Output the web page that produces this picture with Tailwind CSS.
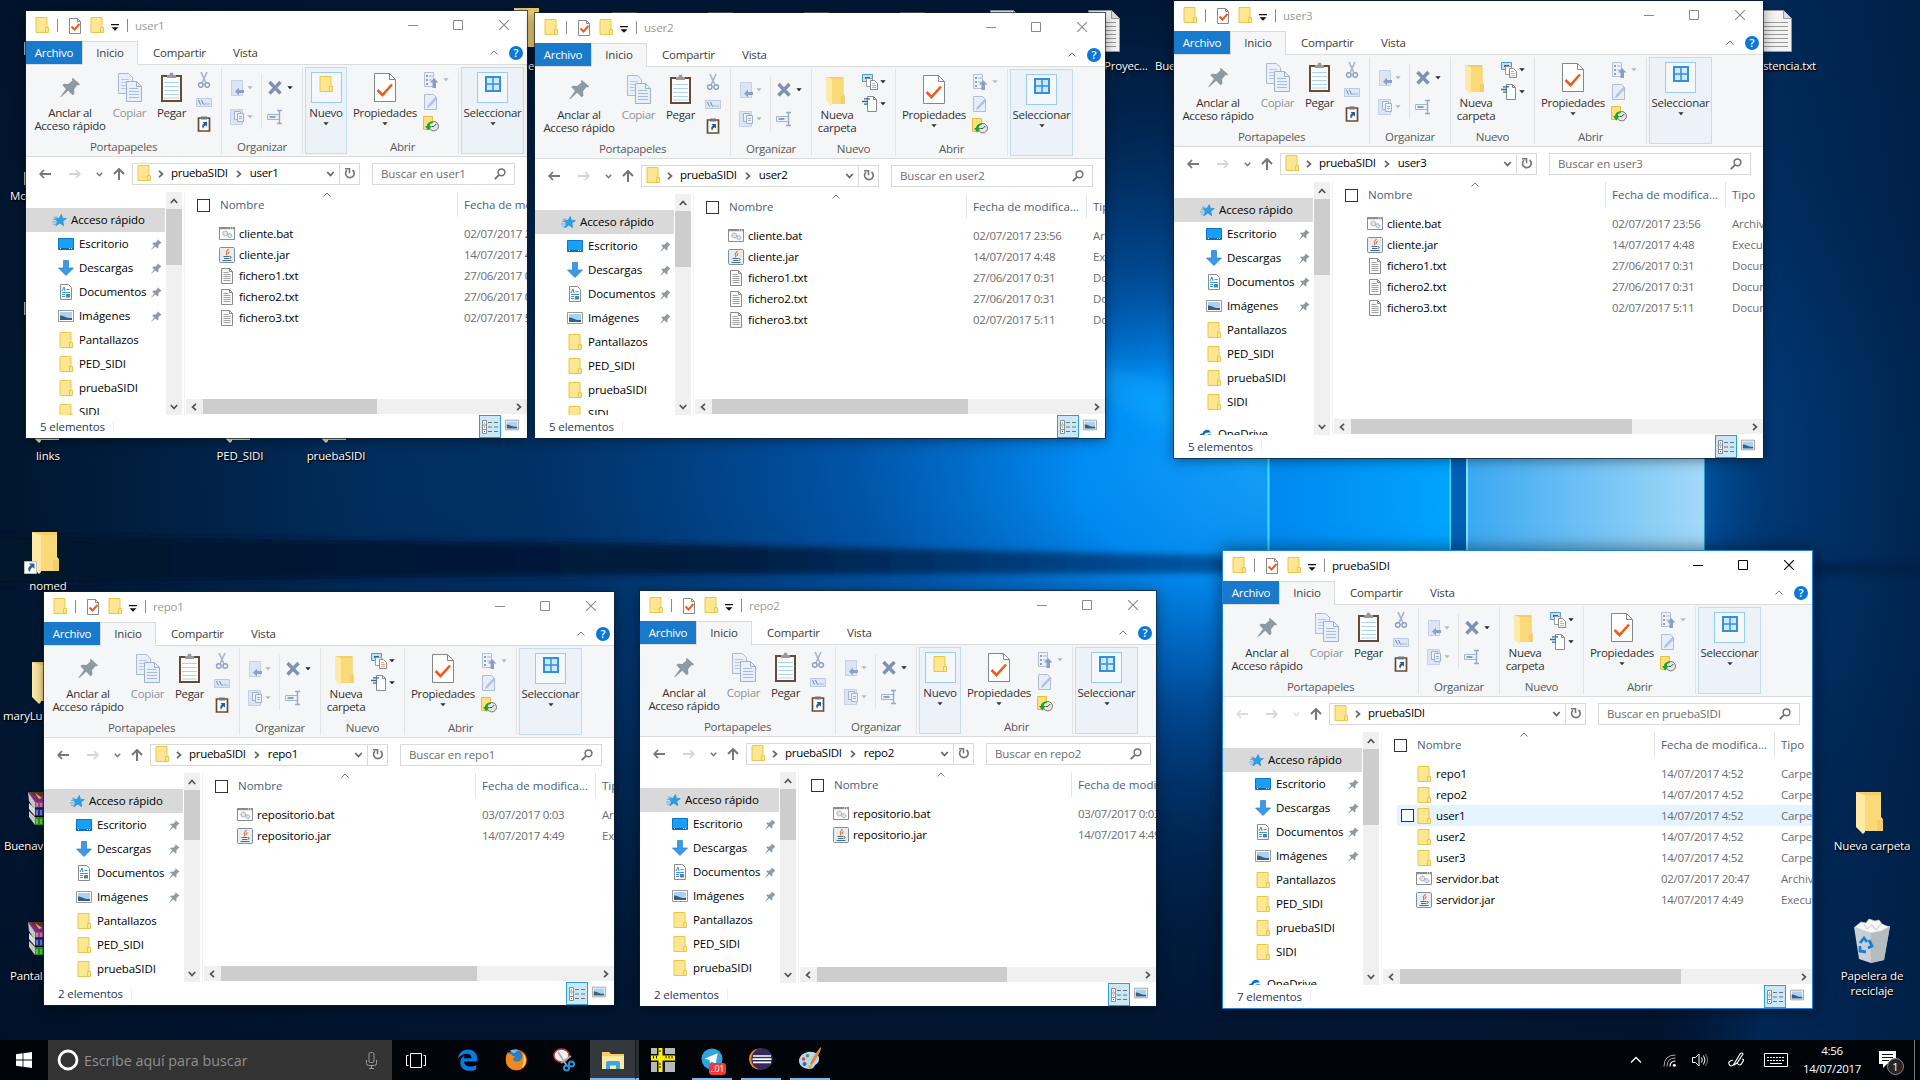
<!DOCTYPE html>
<html lang="es">
<head>
<meta charset="utf-8">
<title>Escritorio</title>
<script src="https://cdn.jsdelivr.net/npm/@tailwindcss/browser@4"></script>
</head>
<body class="relative h-[1080px] w-[1920px] overflow-hidden bg-[#001733] font-['Open_Sans',sans-serif] text-[11.5px] leading-[14px] text-black">

<!-- icon library -->
<svg class="hidden">
  <symbol id="folder" viewBox="0 0 16 16"><path d="M2 .5h11v15H2z" fill="#ffe690" stroke="#e9c64b"/><path d="M11.500 10.500h3v5h-3z" fill="#ffe690" stroke="#e9c64b"/></symbol>
  <symbol id="bigfolder" viewBox="0 0 32 42"><path d="M4 0h25v25l2 2v12H10z" fill="#f3cd68"/><path d="M4 0l9 3v37l-2 2-7-7z" fill="#ffe9a6"/><path d="M13 3h16v25h-4v11H13z" fill="#f9d978"/></symbol>
  <symbol id="check" viewBox="0 0 16 16"><path d="M2.500.5h8l3 3v12h-11z" fill="#fff" stroke="#8a8a8a"/><path d="M10.500.5v3h3" fill="none" stroke="#8a8a8a"/><path d="M4.500 8.500l3 3 5-5.500" fill="none" stroke="#f05a1a" stroke-width="2"/></symbol>
  <symbol id="bigcheck" viewBox="0 0 22 30"><path d="M.5.5h15l6 6v22H.5z" fill="#fff" stroke="#868686"/><path d="M15.500.5v6h6" fill="none" stroke="#868686"/><path d="M3.500 17l5 5L18 11.500" fill="none" stroke="#f05a1a" stroke-width="2.600"/></symbol>
  <symbol id="qat" viewBox="0 0 8 7"><path d="M0 0h8v1.200H0zM.5 3.200h7L4 6.800z" fill="#111"/></symbol>
  <symbol id="down" viewBox="0 0 6 4"><path d="M.3.2h5.400L3 3.300z" fill="currentColor"/></symbol>
  <symbol id="pin" viewBox="0 0 22 22"><path d="M13.500 1l7.500 6.500-1.500 1.300-1.200-.4-3.600 4.500.4 4.600-1.900 1.600-4.600-4.600L1 21.300l-.6-.5 5.800-8.100L2.400 8.500l1.800-1.500 4.500.3 4.300-3.600-.6-1.500z" fill="#8e9aa2"/></symbol>
  <symbol id="copy" viewBox="0 0 24 29"><path d="M.5.5h10l4 4v16H.5z" fill="#e9f0fa" stroke="#aab9d8"/><path d="M3 6.500h8M3 9.500h9M3 12.500h9M3 15.500h9" stroke="#b6c6e4"/><path d="M8.500 8.500h10l5 5v15h-15z" fill="#e9f0fa" stroke="#9eafd2"/><path d="M18.500 8.500v5h5" fill="none" stroke="#9eafd2"/><path d="M11 15.500h9M11 18.500h10M11 21.500h10M11 24.500h10" stroke="#a9bbdd"/></symbol>
  <symbol id="paste" viewBox="0 0 21 30"><path d="M1 4h19v25H1z" fill="#fff" stroke="#6b4a33" stroke-width="2"/><path d="M3 10.500h15M3 14.500h15M3 18.500h15M3 22.500h15M3 26h15" stroke="#a9d5f2"/><path d="M6 6V3h2.500L9 .8h3l.5 2.200H15v3z" fill="#9a9a9a"/></symbol>
  <symbol id="cut" viewBox="0 0 16 16"><path d="M5 0l5 11M11 0L6 11" stroke="#a9b4c8" stroke-width="1.600"/><circle cx="4.800" cy="13" r="2.300" fill="none" stroke="#8ea0c4" stroke-width="1.500"/><circle cx="11.200" cy="13" r="2.300" fill="none" stroke="#8ea0c4" stroke-width="1.500"/></symbol>
  <symbol id="path" viewBox="0 0 16 16"><path d="M.5 4.500h15v8H.5z" fill="#dde7f6" stroke="#b9c9e6"/><path d="M2.500 6l2 4.500M5.500 6l2 4.500" stroke="#6d83ad"/><path d="M8.500 10h1M10.500 10h1M12.500 10h1" stroke="#6d83ad"/></symbol>
  <symbol id="pastelink" viewBox="0 0 16 16"><path d="M2.500 2h11v13h-11z" fill="#fff" stroke="#6b4a33" stroke-width="1.700"/><path d="M5 3.500V.5h6v3z" fill="#777"/><path d="M6.500 6H11v4.500L9.500 9.200C8 10 7.500 11 7.300 12.800 5.500 10.800 6.200 8.500 7.900 7.500z" fill="#1f5ba8"/></symbol>
  <symbol id="moveto" viewBox="0 0 16 16"><path d="M1.500.5h11v15h-11z" fill="#dbe5f4" stroke="#c3d1ea"/><path d="M5 11.500l4-4v2.500h5v3H9v2.500z" fill="#8c9fc8"/></symbol>
  <symbol id="copyto" viewBox="0 0 16 16"><path d="M.5.5h12v15H.5z" fill="#dbe5f4" stroke="#c3d1ea"/><path d="M4.500 2.500h6v8h-6z" fill="#eef3fb" stroke="#9eafd2"/><path d="M7.500 4.500h6v8h-6z" fill="#eef3fb" stroke="#9eafd2"/><path d="M9 7.500h3M9 9.500h3" stroke="#9eafd2"/></symbol>
  <symbol id="del" viewBox="0 0 16 16"><path d="M2.500 2l11 11.500M13.500 2l-11 11.500" stroke="#7f92b4" stroke-width="3.400"/></symbol>
  <symbol id="rename" viewBox="0 0 16 16"><path d="M.5 5.500h12v5H.5z" fill="#eef3fb" stroke="#a3b3d3"/><path d="M2.500 7h6v2h-6z" fill="#8c9fc8"/><path d="M10 1.500h5M10 14.500h5M12.500 1.500v13" stroke="#97a8cb" stroke-width="1.400"/></symbol>
  <symbol id="newitem" viewBox="0 0 16 16"><path d="M.5.5h10v7H.5z" fill="#bfe2f8" stroke="#4a9ccc"/><path d="M3 3h5v2H3z" fill="#1f6fa8"/><path d="M4.500 4.500h6v8h-6z" fill="#fff" stroke="#9a9a9a"/><path d="M8.500 6.500h4l3 3v6h-7z" fill="#fff" stroke="#8a8a8a"/><path d="M10 9.500h3M10 11.500h4M10 13.500h4" stroke="#e3a48a"/></symbol>
  <symbol id="easy" viewBox="0 0 16 16"><path d="M5.500.5h6l3 3v12h-9z" fill="#fff" stroke="#8a8a8a"/><path d="M11.500.5v3h3" fill="none" stroke="#8a8a8a"/><path d="M2 2.800h6M0 5.500h6M2 8.200h4" stroke="#2a6ea8" stroke-width="1.300"/></symbol>
  <symbol id="open" viewBox="0 0 16 16"><path d="M1.500.5h9v14h-9z" fill="#eef2fa" stroke="#b4c1dc"/><path d="M3 3h2v2H3zM3 7h2v2H3zM3 11h2v2H3z" fill="#8e9fc4"/><path d="M6 4h4M6 8h3" stroke="#a9b8d6"/><path d="M11 6l4.500 4.500H13V16H9.500v-5.500H7z" fill="#8c9dc2"/></symbol>
  <symbol id="edit" viewBox="0 0 16 16"><path d="M1.500.5h9l3 3v12h-12z" fill="#e6eefa" stroke="#aebcdb"/><path d="M14 4.500L7 12l-2.500 1.500L5.500 11l7-7.500z" fill="#b9c8e4" stroke="#9aabcf" stroke-width=".6"/></symbol>
  <symbol id="history" viewBox="0 0 16 16"><path d="M.5.5h9v13h-9z" fill="#ffe07a" stroke="#e3bd3d"/><circle cx="10.800" cy="10.200" r="4.700" fill="#e6e6e6" stroke="#767676"/><path d="M10.800 10.500l2.500-2.500M10.800 10.500H8.500" stroke="#444"/><path d="M9.500 5.500C5.500 5.500 4 8 4 10H2l3.300 4.500L8.500 10H6.600c0-2 1.200-3 3.400-3z" fill="#1fa52b"/></symbol>
  <symbol id="select" viewBox="0 0 16 16"><path d="M1 1h14v14H1z" fill="#cfe9fb" stroke="#3390de" stroke-width="2"/><path d="M8 1v14M1 8h14" stroke="#3390de" stroke-width="1.500"/></symbol>
  <symbol id="star" viewBox="0 0 16 16"><path d="M10 1.500l1 4 4.300.5-3.700 2.500.8 5-4-2.900-4.400 3.200 1.800-4.800L3 6l4.400-.2z" fill="#2aa0ea" stroke="#1280cc" stroke-width=".6"/><path d="M2 4.500h4M1 7h4M0 9.500h5M1 12h4" stroke="#4cb2f0"/></symbol>
  <symbol id="desk" viewBox="0 0 16 16"><path d="M.5 2.500h15v11H.5z" fill="#18a0f6" stroke="#0b74c4"/><path d="M1 12h14v1.500H1z" fill="#0a68b0"/><path d="M2 12.500h1M11 12.500h1M13 12.500h1" stroke="#d8f0ff"/></symbol>
  <symbol id="dl" viewBox="0 0 16 16"><path d="M5.500.5h5V8h5L8 15.500.5 8h5z" fill="#3a9ae8" stroke="#2580cf" stroke-width=".7"/></symbol>
  <symbol id="docs" viewBox="0 0 16 16"><path d="M2.500.5h8l3 3v12h-11z" fill="#fff" stroke="#8a8a8a"/><path d="M4 7l2-4 1 4" stroke="#2b8ad0" fill="none"/><path d="M8.500 5.500h3M4 8.500h8M4 10.500h3M4 12.500h3" stroke="#3a97d8"/><path d="M8 10h4v3.500H8z" fill="#4a86a8"/></symbol>
  <symbol id="pics" viewBox="0 0 16 16"><path d="M.5 2.500h15v11H.5z" fill="#fff" stroke="#9a9a9a"/><path d="M2 4h12v8H2z" fill="#a9d2f6"/><path d="M2 7.500c4 0 6 3 12 2.500v2H2z" fill="#38607a"/></symbol>
  <symbol id="onedrive" viewBox="0 0 16 16"><path d="M1 14C0 10 2 7.500 4.500 7.500 5.500 4 9 3 11.500 4.500L13 7c-5-1.500-8 1-8 7z" fill="#0a6fc2"/><path d="M6 14c0-4 3-6.500 6.500-5.500C15 9 16 11 16 14z" fill="#0a6fc2"/></symbol>
  <symbol id="bat" viewBox="0 0 16 16"><path d="M.5 1.500h15v12H.5z" fill="#fff" stroke="#8c8c8c"/><path d="M0 1h16v2.200H0z" fill="#8c8c8c"/><path d="M11 2h1M13 2h1" stroke="#fff"/><circle cx="6.300" cy="7.500" r="2.500" fill="#e4e4e4" stroke="#8e8e8e" stroke-dasharray="1.200 .6"/><circle cx="10.800" cy="9.700" r="2" fill="#cfe6f5" stroke="#7fa4bd" stroke-dasharray="1 .5"/></symbol>
  <symbol id="jar" viewBox="0 0 16 16"><rect x=".5" y=".5" width="15" height="15" rx="1" fill="#e6edf3" stroke="#7d8fa1"/><path d="M9.500 2c-.5 1.500-3 2-2 4 .5 1 .5 1.500-.3 2.200M10.500 4.500c-1.500.7-1.500 1.500-1 2.500" fill="none" stroke="#e8762c" stroke-width="1.200"/><path d="M4.500 9.500h6M5 11.500h5M3.500 13.500h9" stroke="#4a6c8c" stroke-width="1.100"/><path d="M11 9.500c2 0 1.500 2-.5 2" fill="none" stroke="#4a6c8c"/></symbol>
  <symbol id="txt" viewBox="0 0 16 16"><path d="M2.500.5h8l3 3v12h-11z" fill="#fafafa" stroke="#8a8a8a"/><path d="M10.500.5v3h3" fill="none" stroke="#8a8a8a"/><path d="M4.500 4.500h5M4.500 6.500h7M4.500 8.500h7M4.500 10.500h7M4.500 12.500h7" stroke="#a2a2a2"/></symbol>
  <symbol id="bigtxt" viewBox="0 0 32 42"><path d="M.5.5h23l8 8v33H.5z" fill="#f4f4f4" stroke="#999"/><path d="M23.500.5v8h8" fill="#ddd" stroke="#999"/><path d="M4 12.500h24M4 16.500h24M4 20.500h24M4 24.500h24M4 28.500h24M4 32.500h24M4 36.500h24" stroke="#9b9b9b"/></symbol>
  <symbol id="details" viewBox="0 0 16 16"><path d="M.5 1.500h4v13h-4zM.5 6h4M.5 10.500h4" fill="#fff" stroke="#8d8d8d"/><path d="M2 4h1" stroke="#567"/><path d="M2 8h1" stroke="#27c"/><path d="M2 12.500h1" stroke="#c22"/><path d="M6 3.500h4M12 3.500h4M6 8h4M12 8h4M6 12.500h4M12 12.500h4" stroke="#6b7780"/></symbol>
  <symbol id="larr" viewBox="0 0 12 10"><path d="M5 1L1.200 5 5 9M1.500 5H12" fill="none" stroke="currentColor" stroke-width="1.800"/></symbol>
  <symbol id="rarr" viewBox="0 0 12 10"><path d="M7 1l3.800 4L7 9M10.500 5H0" fill="none" stroke="currentColor" stroke-width="1.800"/></symbol>
  <symbol id="uarr" viewBox="0 0 12 12"><path d="M1 6l5-5 5 5M6 1.500V12" fill="none" stroke="currentColor" stroke-width="2"/></symbol>
  <symbol id="chd" viewBox="0 0 8 6"><path d="M.8 1L4 4.500 7.200 1" fill="none" stroke="currentColor" stroke-width="1.800"/></symbol>
  <symbol id="chu" viewBox="0 0 8 6"><path d="M.8 5L4 1.500 7.200 5" fill="none" stroke="currentColor" stroke-width="1.800"/></symbol>
  <symbol id="chuthin" viewBox="0 0 8 5"><path d="M.5 4.500L4 1l3.500 3.500" fill="none" stroke="currentColor" stroke-width="1"/></symbol>
  <symbol id="chr" viewBox="0 0 6 8"><path d="M1 .8L4.500 4 1 7.200" fill="none" stroke="currentColor" stroke-width="1.700"/></symbol>
  <symbol id="chl" viewBox="0 0 6 8"><path d="M5 .8L1.500 4 5 7.200" fill="none" stroke="currentColor" stroke-width="1.700"/></symbol>
  <symbol id="refresh" viewBox="0 0 12 12"><path d="M3 2.200A4.300 4.300 0 108.500 2" fill="none" stroke="#777" stroke-width="1.700"/><path d="M1 .8h4.500v4.400" fill="none" stroke="#777" stroke-width="1.600"/></symbol>
  <symbol id="lens" viewBox="0 0 12 12"><circle cx="7.500" cy="4.300" r="3.400" fill="none" stroke="#6f6f6f" stroke-width="1.500"/><path d="M5 6.800L.8 11.200" stroke="#6f6f6f" stroke-width="1.800"/></symbol>
  <symbol id="max" viewBox="0 0 10 10"><path d="M.5.5h9v9h-9z" fill="none" stroke="currentColor"/></symbol>
  <symbol id="close" viewBox="0 0 10 10"><path d="M0 0l10 10M10 0L0 10" stroke="currentColor" stroke-width="1.100"/></symbol>
  <symbol id="shortcut" viewBox="0 0 13 13"><path d="M.5.500h12v12H.5z" fill="#fff" stroke="#bbb"/><path d="M5 2.500h5.500V8L8.700 6.200C6.500 7.500 6 9 6 11 3 9 4 6 6.800 4.300z" fill="#2a5fa8"/></symbol>
  <symbol id="rar" viewBox="0 0 42 36"><path d="M1 1h30l8 10H8z" fill="#8d2a86"/><path d="M3 1h28l3 4H7z" fill="#5d3a28"/><path d="M1 1l7 10v8L2 10z" fill="#c9c9c9"/><path d="M8 11h32v6H8z" fill="#a64aa0"/><path d="M2 12l6 6v7l-6-7z" fill="#dcdcdc"/><path d="M8 17h32v8H8z" fill="#1b2fd0"/><path d="M2 20l6 6v8l-6-8z" fill="#c9c9c9"/><path d="M8 26h32v8H8z" fill="#19a31c"/><path d="M8 17h32M8 25.500h32" stroke="#000"/><path d="M10 12v4M14 12v4M10 19v5M14 19v5M10 28v5M14 28v5" stroke="#e9e07a"/><path d="M8 2l7 5-3 1z" fill="#dcd93a"/></symbol>
</svg>

<!-- wallpaper -->
<svg class="absolute inset-0" width="1920" height="1080" viewBox="0 0 1920 1080">
  <defs>
    <linearGradient id="base" x1="0" x2="1" y1="0" y2="0"><stop offset="0" stop-color="#00162f"/><stop offset=".2" stop-color="#002f60"/><stop offset=".5" stop-color="#003a78"/><stop offset=".75" stop-color="#00408a"/><stop offset="1" stop-color="#002550"/></linearGradient>
    <radialGradient id="glow" cx="0" cy="0" r="1" gradientUnits="userSpaceOnUse" gradientTransform="translate(1320 480) scale(800 390)"><stop offset="0" stop-color="#1aa5ff"/><stop offset=".3" stop-color="#0090fa"/><stop offset=".58" stop-color="#0064c4" stop-opacity=".7"/><stop offset="1" stop-color="#0050a0" stop-opacity="0"/></radialGradient>
    <linearGradient id="vert" x1="0" x2="0" y1="0" y2="1"><stop offset="0" stop-color="#00132c" stop-opacity=".9"/><stop offset=".18" stop-color="#00132c" stop-opacity=".4"/><stop offset=".35" stop-color="#00132c" stop-opacity="0"/><stop offset=".62" stop-color="#00132c" stop-opacity=".1"/><stop offset=".85" stop-color="#00122a" stop-opacity=".75"/><stop offset="1" stop-color="#001026" stop-opacity=".95"/></linearGradient>
    <linearGradient id="right" x1="0" x2="1" y1="0" y2="0"><stop offset="0" stop-color="#002450" stop-opacity="0"/><stop offset=".4" stop-color="#002f64" stop-opacity=".75"/><stop offset="1" stop-color="#00224a" stop-opacity=".85"/></linearGradient>
    <linearGradient id="stripe" x1="0" x2="1" y1="0" y2="0"><stop offset="0" stop-color="#00122a"/><stop offset=".6" stop-color="#001c40"/><stop offset="1" stop-color="#004a94" stop-opacity=".8"/></linearGradient>
    <linearGradient id="p1" x1="0" x2="1" y1="0" y2="0"><stop offset="0" stop-color="#0088ee"/><stop offset="1" stop-color="#00a4ff"/></linearGradient>
    <linearGradient id="p2" x1="0" x2="1" y1="0" y2="0"><stop offset="0" stop-color="#3aa8f2"/><stop offset="1" stop-color="#a3d9f8"/></linearGradient>
    <filter id="b" x="-10%" y="-60%" width="120%" height="220%"><feGaussianBlur stdDeviation="3"/></filter>
    <filter id="bb" x="-30%" y="-30%" width="160%" height="160%"><feGaussianBlur stdDeviation="16"/></filter>
  </defs>
  <path d="M0 0h1920v1080H0z" fill="url(#base)"/>
  <path d="M0 0h1920v1080H0z" fill="url(#glow)"/>
  <path d="M1270 470L1000 340 1105 375 1270 420z" fill="#12b4ff" opacity=".8" filter="url(#bb)"/>
  <path d="M0 0h1920v1080H0z" fill="url(#vert)"/>
  <path d="M1660 0h260v1080h-260z" fill="url(#right)"/>
  <path d="M-20 536L620 543 1240 556v17L620 575 -20 584z" fill="url(#stripe)" filter="url(#b)"/>
  <path d="M1810 562h110v14h-110z" fill="#001a3c" opacity=".5" filter="url(#b)"/>
  <path d="M1268 440h183v110h-183z" fill="url(#p1)"/><path d="M1268.500 440v110M1450.500 440v110" stroke="#3fe0ff" stroke-width="2"/>
  <path d="M1451 440h15v112h-15z" fill="#0060b4"/>
  <path d="M1466 440h238v110h-238z" fill="url(#p2)"/><path d="M1467 440v110M1703.500 440v110" stroke="#7fe6ff" stroke-width="2"/>
</svg>

<div id="desktop"></div>
<div id="windows"></div>

<!-- taskbar -->
<div class="absolute bottom-0 left-0 flex h-10 w-full bg-[#010408] text-white">
  <div class="flex w-12 items-center justify-center"><svg width="16" height="16" viewBox="0 0 16 16" class="fill-white"><path d="M0 2.200L6.600 1.300v6.300H0zM7.400 1.200L16 0v7.600H7.400zM0 8.400h6.600v6.300L0 13.800zM7.400 8.400H16V16l-8.600-1.200z"/></svg></div>
  <div class="flex w-[344px] items-center bg-[#333333] pr-[15px] pl-[9px]">
    <svg width="22" height="22" viewBox="0 0 22 22"><circle cx="11" cy="11" r="9" fill="none" stroke="#fff" stroke-width="2.800"/></svg>
    <span class="mt-px ml-[5px] text-[14.3px] leading-5 text-[#8f8f8f]">Escribe aquí para buscar</span>
    <svg class="ml-auto" width="11" height="17" viewBox="0 0 11 17" fill="none" stroke="#9a9a9a"><rect x="3" y=".5" width="5" height="10" rx="1.500"/><path d="M.5 8v3.500q0 2 2 2h6q2 0 2-2V8M5.500 13.500v3M3 16.500h5"/></svg>
  </div>
  <div class="flex w-[47px] items-center justify-center"><svg width="20" height="15" viewBox="0 0 20 15" fill="none" stroke="#fff"><path d="M4.500.5h11v14h-11zM2.500 2.500h-2v10h2M17.500 2.500h2v10h-2"/></svg></div>
  <div class="flex w-[56px] items-center justify-center"><svg width="21" height="22" viewBox="0 0 21 22"><path d="M.8 9.800C1.500 4 5.500.5 11 .5c6 0 9.500 4.500 9.500 9.500v2.500H7c.2 3.500 3 5 6.500 5 2.300 0 4-.6 5.700-1.600v4.400c-1.800 1-4 1.500-6.500 1.500-6 0-9.400-3.300-9.400-8.300 0-3.500 2-6 4.800-7.300-.8 1-1.200 2-1.300 3h7.700c0-2.700-1.400-4.500-4.400-4.500C6.300 4.700 2.700 6.700.8 9.800z" fill="#0a7be0"/></svg></div>
  <div class="flex w-[43px] items-center justify-center"><svg width="23" height="22" viewBox="0 0 23 22"><circle cx="11.500" cy="11" r="10.500" fill="#dd4a1a"/><circle cx="10.500" cy="8.500" r="7.500" fill="#2a7fc4"/><path d="M5 1.500C8 0 12 0 14 1.500c-2 0-4 1.500-5 3z" fill="#7cc0ea"/><path d="M1.500 6c.5-2 1-2 1.500-3 .5 1.500 2 2.500 3.500 2.500 1 1.500 2.500 1.500 4 2-1 1.500-2.500 1.500-2.500 3 1 2.500 4 2.500 6.500 1.500 3-1.500 4-5 1.500-9.500 4 2.500 5.500 6 5 10-1 6-6 9-10.500 8.500C4 20.500.5 16 .8 10.500c0-2 .2-3.500.7-4.500z" fill="#f08a1e"/><path d="M18 4c2.500 3 3.500 7 2.500 11-1.500 2-2 3-4 4 2-4 3-9 1.500-15z" fill="#ffd54a"/></svg></div>
  <div class="flex w-[52px] items-center justify-center"><svg width="24" height="24" viewBox="0 0 24 24"><ellipse cx="9.500" cy="7.500" rx="7.500" ry="6.500" fill="#f2f2f4" stroke="#c8394a" stroke-width="1.400"/><path d="M6 4l9 14M19 8L9 15" stroke="#a9aeb4" stroke-width="1.600"/><circle cx="14.500" cy="20" r="2.500" fill="none" stroke="#2f93d8" stroke-width="2"/><circle cx="19.500" cy="16" r="2.500" fill="none" stroke="#2f93d8" stroke-width="2"/></svg></div>
  <div class="flex w-[45px] items-center justify-center border-b-2 border-[#76b9ed] bg-[#33383c] pt-0.5"><svg width="22" height="19" viewBox="0 0 22 19"><path d="M0 1h7l2 2h13v14H0z" fill="#f7cf63"/><path d="M0 5h22v13H0z" fill="#ffe9a3"/><path d="M4 18v-6q0-2 2-2h10q2 0 2 2v6h-4v-3.500H8V18z" fill="#35a7e8"/></svg></div>
  <div class="w-1 border-b-2 border-l border-[#76b9ed] border-l-[#16191c] bg-[#2b2f33]"></div>
  <div class="flex w-12 items-center justify-center"><svg width="24" height="24" viewBox="0 0 24 24"><path d="M0 0h24v24H0z" fill="#b9b9b9"/><path d="M6 0h8v24H6zM0 6h24v8H0z" fill="#111"/><path d="M7.500 0h4v24h-4zM0 7.500h24v5H0z" fill="#fff200"/><path d="M2.500 8v2.500M5.500 8v2.500M15 8v2.500M18 8v2.500M21 8v2.500M8 3h2M8 16h2M8 19h2" stroke="#111"/></svg></div>
  <div class="flex w-[49px] flex-col items-center"><div class="relative flex h-[38px] items-center"><svg width="22" height="22" viewBox="0 0 23 23"><circle cx="11.500" cy="11.500" r="11" fill="#2ca5e0"/><path d="M4 11l13.500-5.500L15.300 17l-4-2.800-2 2-.4-3.700z" fill="#fff"/></svg><span class="absolute top-[23px] left-[8px] rounded-[3px] bg-[#ee3a3a] px-[2px] text-[9px] leading-[12px] tracking-[-0.4px]">..01</span></div><div class="h-0.5 w-10 bg-[#76b9ed]"></div></div>
  <div class="flex w-[49px] flex-col items-center"><div class="flex h-[38px] items-center"><svg width="24" height="22" viewBox="0 0 24 22"><circle cx="10.500" cy="11" r="10.500" fill="#e88a2a"/><circle cx="13" cy="11" r="10.700" fill="#342a5e"/><path d="M4 8h18M3.500 11.200h19M4 14.400h18" stroke="#fff" stroke-width="1.700"/></svg></div><div class="h-0.5 w-10 bg-[#76b9ed]"></div></div>
  <div class="flex w-[50px] flex-col items-center"><div class="flex h-[38px] items-center"><svg width="24" height="24" viewBox="0 0 24 24"><path d="M10 5c6-1 12 2 11 8-.5 4-4 4-5 7-2 4-15 2-15-6C1 9 5 6 10 5z" fill="#b9d8ec"/><circle cx="5.500" cy="12" r="1.800" fill="#e2453c"/><circle cx="9.500" cy="8.800" r="1.700" fill="#3aa34a"/><circle cx="6.500" cy="17" r="2" fill="#3a62c8"/><circle cx="12" cy="19.500" r="1.800" fill="#f0a328"/><path d="M23 0c1 3-5 12-9 18l-2-1C14 11 20 3 23 0z" fill="#d98a3a"/></svg></div><div class="h-0.5 w-10 bg-[#76b9ed]"></div></div>
  <div class="ml-auto flex items-center">
    <svg width="12" height="8" viewBox="0 0 12 8"><path d="M1 6.500L6 1.500l5 5" fill="none" stroke="#fff" stroke-width="1.300"/></svg>
    <svg class="ml-[21px]" width="13" height="13" viewBox="0 0 13 13" fill="none"><path d="M1 12.500Q1 1 12.500 1M4 12.500Q4 4 12.500 4" stroke="#aaa"/><path d="M7 12.500Q7 7 12.500 7" stroke="#fff" stroke-width="1.200"/><circle cx="11.300" cy="11.300" r="1.500" fill="#fff"/></svg>
    <svg class="ml-[16px]" width="17" height="14" viewBox="0 0 17 14" fill="none" stroke="#fff"><path d="M.5 4.500h3l3.500-3.500v12L3.500 9.500h-3zM9.500 4.500q1.500 2.500 0 5M11.500 2.500q3 4.500 0 9"/><path d="M13.500 1q4 6 0 12" stroke="#777"/></svg>
    <svg class="ml-[19px]" width="17" height="16" viewBox="0 0 17 16" fill="none" stroke="#fff" stroke-width="1.200"><path d="M6 12L12 2q2-2 3 0L9 11l-3 2zM5 8q-5 1-4 4 2 4 5 0M9 11q3 4 5 0 3-4 0-4"/></svg>
    <svg class="ml-[19px]" width="24" height="14" viewBox="0 0 24 14" fill="none" stroke="#fff"><path d="M.5.5h23v13H.5z"/><path d="M3 4.500h18M3 7.500h18" stroke-dasharray="2 1"/><path d="M6 10.500h12"/></svg>
    <div class="ml-[10px] w-[68px] text-center text-[11.5px] leading-[18px] tracking-[-0.3px]">4:56<br>14/07/2017</div>
    <div class="relative ml-[13px] h-[18px] w-[17px]"><svg width="17" height="17" viewBox="0 0 17 17"><path d="M0 0h17v13H8l-4 4v-4H0z" fill="#fff"/><path d="M3 3.500h11M3 6.500h11M3 9.500h7" stroke="#111" stroke-width="1.200"/></svg><span class="absolute top-[7px] left-[8px] flex size-[17px] items-center justify-center rounded-full border border-[#888] bg-[#262626] text-[11px]">1</span></div>
    <div class="ml-[18px] h-10 w-[6px] border-l border-[#777]"></div>
  </div>
</div>

<script>
const ic = (id, cls) => `<svg class="shrink-0 ${cls}"><use href="#${id}"/></svg>`;

/* ---------- desktop icons ---------- */
const shortcuts = [
  {x:608,y:12,i:'bigfolder'},{x:704,y:12,i:'bigfolder'},{x:800,y:12,i:'bigfolder'},{x:896,y:12,i:'bigfolder'},
  {x:510,y:8,i:'bigfolder'},{x:990,y:10,i:'bigtxt'},{x:1088,y:10,i:'bigtxt'},{x:1760,y:10,i:'bigtxt'},
  {x:28,y:401,i:'bigfolder'},{x:219,y:401,i:'bigfolder'},{x:315,y:401,i:'bigfolder'},
  {x:28,y:532,i:'bigfolder',s:1},{x:28,y:662,i:'bigfolder'},
  {x:1852,y:792,i:'bigfolder'}
];
const labels = [
  {x:0,y:448,t:'links'},{x:192,y:448,t:'PED_SIDI'},{x:288,y:448,t:'pruebaSIDI'},
  {x:0,y:578,t:'nomed'},{x:1824,y:838,t:'Nueva carpeta'},{x:1824,y:968,t:'Papelera de<br>reciclaje'}
];
const cut = [{x:10,y:188,t:'Mo'},{x:3,y:708,t:'maryLu'},{x:4,y:838,t:'Buenav'},{x:10,y:968,t:'Pantal'},{x:1104,y:58,t:'Proyec...'},{x:1155,y:58,t:'Bue'},{x:1763,y:58,t:'stencia.txt'},{x:528,y:58,t:'e'}];
document.getElementById('desktop').innerHTML =
  shortcuts.map(o => `<div class="absolute h-[42px] w-8" style="left:${o.x}px;top:${o.y}px">${ic(o.i,'h-[42px] w-8')}${o.s ? `<div class="absolute -left-1 bottom-0">${ic('shortcut','size-[13px]')}</div>` : ''}</div>`).join('') +
  [42,172,302].map(y => `<div class="absolute left-6 h-[13px] w-3 bg-[#b9bcc0]" style="top:${y}px"></div>`).join('') +
  [791,921].map(y => `<div class="absolute left-[27px]" style="top:${y}px">${ic('rar','h-[36px] w-[42px]')}</div>`).join('') +
  labels.map(o => `<div class="absolute w-24 text-center leading-[15px] tracking-[-0.1px] text-white [text-shadow:0_1px_2px_#000,1px_1px_1px_#000]" style="left:${o.x}px;top:${o.y}px">${o.t}</div>`).join('') +
  cut.map(o => `<div class="absolute whitespace-nowrap leading-[15px] tracking-[-0.2px] text-white [text-shadow:0_1px_2px_#000,1px_1px_1px_#000]" style="left:${o.x}px;top:${o.y}px">${o.t}</div>`).join('') +
  `<svg class="absolute left-[1852px] top-[918px]" width="40" height="46" viewBox="0 0 40 46">
    <path d="M2 9l36-1-6 34-13 3-12-4z" fill="#d9dde0" opacity=".93"/><path d="M19 13l19-5-6 34-13 3z" fill="#b3b9be" opacity=".9"/>
    <path d="M3 9l6-5 5 1 3-4 6 2 4-1 3 4 7 3-8 4-10 2-9-3z" fill="#f7f7f7" stroke="#c9cdd0" stroke-width=".7"/>
    <path d="M12 6l3 5 5-4 4 5 5-6" stroke="#c3c8cc" fill="none"/>
    <path d="M8 25l4-5 3 4M17 22l3 6-4 2M14 34l-6-1v-5" stroke="#1580d4" stroke-width="2.800" fill="none"/></svg>`;

/* ---------- explorer windows ---------- */
const F = (i,n,d,t,h) => ({i,n,d,t,h});
const userFiles = [
  F('bat','cliente.bat','02/07/2017 23:56','Archivo por lotes'), F('jar','cliente.jar','14/07/2017 4:48','Executable Jar'),
  F('txt','fichero1.txt','27/06/2017 0:31','Documento'), F('txt','fichero2.txt','27/06/2017 0:31','Documento'), F('txt','fichero3.txt','02/07/2017 5:11','Documento')];
const repoFiles = [F('bat','repositorio.bat','03/07/2017 0:03','Archivo por lotes'), F('jar','repositorio.jar','14/07/2017 4:49','Executable Jar')];
const rootFiles = ['repo1','repo2','user1','user2','user3'].map(n => F('folder',n,'14/07/2017 4:52','Carpeta de archivos', n === 'user1'))
  .concat([F('bat','servidor.bat','02/07/2017 20:47','Archivo por lotes'), F('jar','servidor.jar','14/07/2017 4:49','Executable Jar')]);
const wins = [
  {n:'user1',x:26,y:11,w:501,h:427,addr:228,search:143,vt:56,ht:174,rows:8,files:userFiles,small:1},
  {n:'user2',x:535,y:13,w:570,h:425,addr:238,search:202,vt:56,ht:256,rows:8,files:userFiles},
  {n:'user3',x:1174,y:1,w:589,h:457,addr:257,search:202,vt:76,ht:281,rows:9,files:userFiles},
  {n:'repo1',x:44,y:592,w:570,h:413,addr:238,search:202,vt:50,ht:256,rows:7,files:repoFiles},
  {n:'repo2',x:640,y:591,w:516,h:415,addr:228,search:165,vt:51,ht:190,rows:7,files:repoFiles,small:1},
  {n:'pruebaSIDI',x:1223,y:551,w:589,h:457,addr:257,search:202,vt:76,ht:281,rows:9,files:rootFiles,active:1}
];
const nav = [['desk','Escritorio',1],['dl','Descargas',1],['docs','Documentos',1],['pics','Imágenes',1],['folder','Pantallazos'],['folder','PED_SIDI'],['folder','pruebaSIDI'],['folder','SIDI']];

const group = (cls, label, body) => `<div class="flex h-[87px] shrink-0 flex-col border-r border-[#e2e3e4] ${cls}"><div class="flex h-[73px]">${body}</div><div class="text-center leading-[14px] text-[#5a5a5a]">${label}</div></div>`;
const big = (cls, icon, text) => `<div class="flex shrink-0 flex-col items-center pt-[5px] ${cls}"><div class="flex h-8 items-start justify-center">${icon}</div><div class="mt-0.5 whitespace-nowrap text-center leading-[13px]">${text}</div></div>`;
const arrow = `<div class="flex h-[10px] items-center justify-center">${ic('down','h-[4px] w-[6px]')}</div>`;
const box = (cls, icon, text) => `<div class="flex h-[87px] shrink-0 flex-col items-center border border-[#c2dcf3] bg-[#ecf2f8] pt-[4px] ${cls}"><div class="flex h-[31px] w-[31px] justify-center border border-[#99ccf5] bg-[#f5f8fb] pt-[3px]">${ic(icon,'size-4')}</div><div class="mt-[3px] leading-[13px]">${text}</div>${arrow}</div>`;

function ribbon(w) {
  return `<div class="flex h-[92px] shrink-0 overflow-hidden border-b border-[#dadbdc] bg-[#f5f6f7] pt-0.5 tracking-[-0.3px] text-[#333]">` +
    group('w-[196px]', 'Portapapeles', `
      <div class="w-1"></div>
      ${big('w-20', ic('pin','mt-[5px] size-[21px]'), 'Anclar al<br>Acceso rápido')}
      ${big('w-[39px] text-[#8f9396]', ic('copy','mt-px h-[29px] w-6'), 'Copiar')}
      ${big('w-[45px]', ic('paste','h-[30px] w-[21px]'), 'Pegar')}
      <div class="flex w-5 flex-col items-center gap-1.5 pt-[5px]">${ic('cut','size-4')}${ic('path','size-4')}${ic('pastelink','size-4')}</div>`) +
    group('w-[81px]', 'Organizar', `
      <div class="flex w-[39px] flex-col gap-[13px] pt-[13px] pl-2">
        <div class="flex items-center gap-px text-[#b3b9c2]">${ic('moveto','size-4')}${ic('down','h-[4px] w-[6px]')}</div>
        <div class="flex items-center gap-px text-[#b3b9c2]">${ic('copyto','size-4')}${ic('down','h-[4px] w-[6px]')}</div>
      </div>
      <div class="mt-[7px] h-[55px] w-px bg-[#e2e3e4]"></div>
      <div class="flex flex-col gap-[13px] pt-[13px] pl-[5px]">
        <div class="flex items-center gap-1 text-[#222]">${ic('del','size-4')}${ic('down','h-[4px] w-[6px]')}</div>
        ${ic('rename','size-4')}
      </div>`) +
    (w.small ? box('ml-0.5 w-[42px]', 'folder', 'Nuevo') :
    group('w-[84px]', 'Nuevo', `
      ${big('ml-[3px] w-11', ic('bigfolder','mt-[3px] mr-1.5 h-[29px] w-[23px]'), 'Nueva<br>carpeta')}
      <div class="flex flex-col gap-1.5 pt-[5px] pl-[3px] text-[#222]">
        <div class="flex items-center gap-0.5">${ic('newitem','size-4')}${ic('down','h-[4px] w-[6px]')}</div>
        <div class="flex items-center gap-0.5">${ic('easy','size-4')}${ic('down','h-[4px] w-[6px]')}</div>
      </div>`)) +
    group('w-[112px]', 'Abrir', `
      ${big('ml-[5px] w-[66px]', ic('bigcheck','mt-px h-[30px] w-[22px]'), 'Propiedades' + arrow)}
      <div class="flex flex-col gap-1.5 pt-[5px] pl-[5px]">
        <div class="flex items-center gap-1 text-[#b3b9c2]">${ic('open','size-4')}${ic('down','h-[4px] w-[6px]')}</div>
        ${ic('edit','size-4')}${ic('history','size-4')}
      </div>`) +
    box('ml-0.5 w-[63px]', 'select', 'Seleccionar') + `</div>`;
}

function win(w) {
  const dim = w.active ? 'text-[#dcdcdc]' : 'text-[#777]';
  const crumbs = w.active ? `<span class="-mt-0.5">pruebaSIDI</span>` : `<span class="-mt-0.5">pruebaSIDI</span>${ic('chr','mx-[8px] h-2 w-1.5 text-[#666]')}<span class="-mt-0.5">${w.n}</span>`;
  return `<section class="absolute flex flex-col overflow-hidden bg-white outline-1 ${w.active ? 'outline-[#1883d7] shadow-[0_0_16px_2px_rgba(0,0,0,0.5)]' : 'outline-[#0c2038]/70 shadow-[0_2px_12px_rgba(0,0,0,0.45)]'}" style="left:${w.x}px;top:${w.y}px;width:${w.w}px;height:${w.h}px">
    <header class="flex h-[30px] shrink-0 items-start pt-1.5">
      ${ic('folder','ml-2 size-4')}<i class="mt-0.5 ml-[7px] h-[13px] w-px bg-[#8a8a8a]"></i>
      ${ic('check','mt-px ml-[9px] size-4')}${ic('folder','ml-1.5 size-4')}
      ${ic('qat','mt-[7px] ml-[6px] h-[7px] w-2')}<i class="mt-0.5 ml-2 h-[13px] w-px bg-[#8a8a8a]"></i>
      <span class="mt-0.5 ml-[7px] leading-[14px] tracking-[-0.2px] ${w.active ? 'text-black' : 'text-[#9a9a9a]'}">${w.n}</span>
      <div class="mt-[3px] mr-[18px] ml-auto flex ${w.active ? 'text-black' : 'text-[#8a8a8a]'}">
        <i class="mt-[5px] mr-[35px] h-px w-2.5 bg-current"></i>${ic('max','mr-9 size-2.5')}${ic('close','size-2.5')}
      </div>
    </header>
    <div class="flex h-6 shrink-0 text-[#3c3c3c] tracking-[-0.2px]">
      <div class="flex w-14 items-center justify-center border-b border-[#dadbdc] bg-[#1979ca] text-white">Archivo</div>
      <div class="flex w-14 items-center justify-center border-x border-t border-[#dadbdc] bg-[#f5f6f7] pb-px">Inicio</div>
      <div class="flex flex-1 items-center border-b border-[#dadbdc] pl-[15px]"><span class="w-20">Compartir</span><span>Vista</span>
        ${ic('chuthin','mr-[11px] ml-auto h-[5px] w-2 text-[#777]')}
        <span class="mr-1 flex size-[14px] items-center justify-center rounded-full bg-[#0a78d4] text-[11px] font-semibold leading-none text-white">?</span>
      </div>
    </div>
    ${ribbon(w)}
    <div class="flex h-[35px] shrink-0 items-start pt-1.5 pl-[13px]">
      <div class="flex h-[22px] items-center">${ic('larr','h-2.5 w-3 ' + dim)}${ic('rarr','ml-[18px] h-2.5 w-3 text-[#d6d6d6]')}${ic('chd','ml-[15px] h-[5px] w-[7px] ' + dim)}${ic('uarr','ml-[10px] size-3 text-[#777]')}</div>
      <div class="ml-[7px] flex h-[22px] shrink-0 items-center border border-[#d9d9d9] pl-[3px] tracking-[-0.3px]" style="width:${w.addr}px">
        ${ic('folder','-mt-0.5 size-4')}${ic('chr','ml-[6px] mr-[7px] h-2 w-1.5 text-[#666]')}${crumbs}
        ${ic('chd','mr-1 ml-auto h-1.5 w-[9px] text-[#666]')}
        <div class="flex h-5 w-5 items-center justify-center border-l border-[#d9d9d9]">${ic('refresh','size-3')}</div>
      </div>
      <div class="ml-3 flex h-[22px] shrink-0 items-center border border-[#d9d9d9] pr-2 pl-2 tracking-[-0.1px] text-[#6d6d6d]" style="width:${w.search}px"><span class="-mt-px">Buscar en ${w.n}</span>${ic('lens','ml-auto size-3')}</div>
    </div>
    <div class="flex min-h-0 flex-1">
      <nav class="w-[139px] shrink-0 overflow-hidden pt-4 tracking-[-0.1px]">
        <div class="flex h-6 items-center gap-1 bg-[#d9d9d9] pl-[26px]">${ic('star','size-[15px]')}Acceso rápido</div>
        ${nav.slice(0, w.rows).map(([i,t,p]) => `<div class="flex h-6 items-center gap-[5px] pl-8">${ic(i,'size-4')}${t}${p ? ic('pin','mr-[3px] ml-auto size-[11px]') : ''}</div>`).join('')}
        ${w.rows > 8 ? `<div class="mt-2 flex h-6 items-center gap-1 pl-6">${ic('onedrive','size-4')}<span>OneDrive</span></div>` : ''}
      </nav>
      <div class="ml-px flex w-4 shrink-0 flex-col items-center bg-[#f0f0f0]">
        <div class="flex h-[17px] items-center">${ic('chu','h-1.5 w-2 text-[#555]')}</div>
        <div class="w-full bg-[#cdcdcd]" style="height:${w.vt}px"></div>
        <div class="mt-auto flex h-[17px] items-center">${ic('chd','h-1.5 w-2 text-[#555]')}</div>
      </div>
      <div class="ml-0.5 flex min-w-0 flex-1 flex-col border-l border-[#f2f2f2]">
        <div class="flex h-[25px] shrink-0 overflow-hidden text-[#4c607a]">
          <div class="relative flex w-[273px] shrink-0 items-center border-r border-[#e5e5e5] pl-3"><i class="mt-0.5 size-[13px] border border-[#333]"></i><span class="ml-[10px]">Nombre</span><span class="absolute top-0 left-[138px]">${ic('chuthin','h-[5px] w-2 text-[#777]')}</span></div>
          <div class="flex w-[120px] shrink-0 items-center border-r border-[#e5e5e5] pl-1.5 whitespace-nowrap">Fecha de modifica...</div>
          <div class="flex shrink-0 items-center pl-1.5">Tipo</div>
        </div>
        <div class="mt-[6px] flex-1 overflow-hidden">
          ${w.files.map(f => `<div class="flex h-[21px] items-center whitespace-nowrap ${f.h ? 'ml-[15px] bg-[#e5f3ff]' : 'pl-[15px]'}"><i class="ml-1 size-[13px] shrink-0 ${f.h ? 'border border-[#333] bg-white' : ''}"></i>${ic(f.i,'ml-0.5 size-4')}<span class="ml-1 w-[225px] shrink-0 tracking-[-0.15px]">${f.n}</span><span class="w-[120px] shrink-0 tracking-[-0.3px] text-[#6d6d6d]">${f.d}</span><span class="tracking-[-0.15px] text-[#6d6d6d]">${f.t}</span></div>`).join('')}
        </div>
        <div class="mb-px ml-px flex h-[15px] shrink-0 bg-[#f0f0f0]">
          <div class="flex w-[17px] items-center justify-center pr-px">${ic('chl','h-2 w-1.5 text-[#555]')}</div>
          <div class="bg-[#cdcdcd]" style="width:${w.ht}px"></div>
          <div class="ml-auto flex w-4 items-center justify-center">${ic('chr','h-2 w-1.5 text-[#555]')}</div>
        </div>
      </div>
    </div>
    <footer class="flex h-[23px] shrink-0 items-center pr-2 pl-[14px] text-[#1e395b]">
      <span class="w-[74px] border-r border-[#ececec] leading-[11px] tracking-[-0.1px]">${w.files.length} elementos</span>
      <div class="mr-1 ml-auto flex h-[23px] w-[22px] items-center justify-center border border-[#26a0da] bg-[#cbe8f6]">${ic('details','size-4')}</div>
      ${ic('pics','-mt-1 size-[14px]')}
    </footer>
  </section>`;
}
document.getElementById('windows').innerHTML = wins.map(win).join('');
</script>
</body>
</html>
